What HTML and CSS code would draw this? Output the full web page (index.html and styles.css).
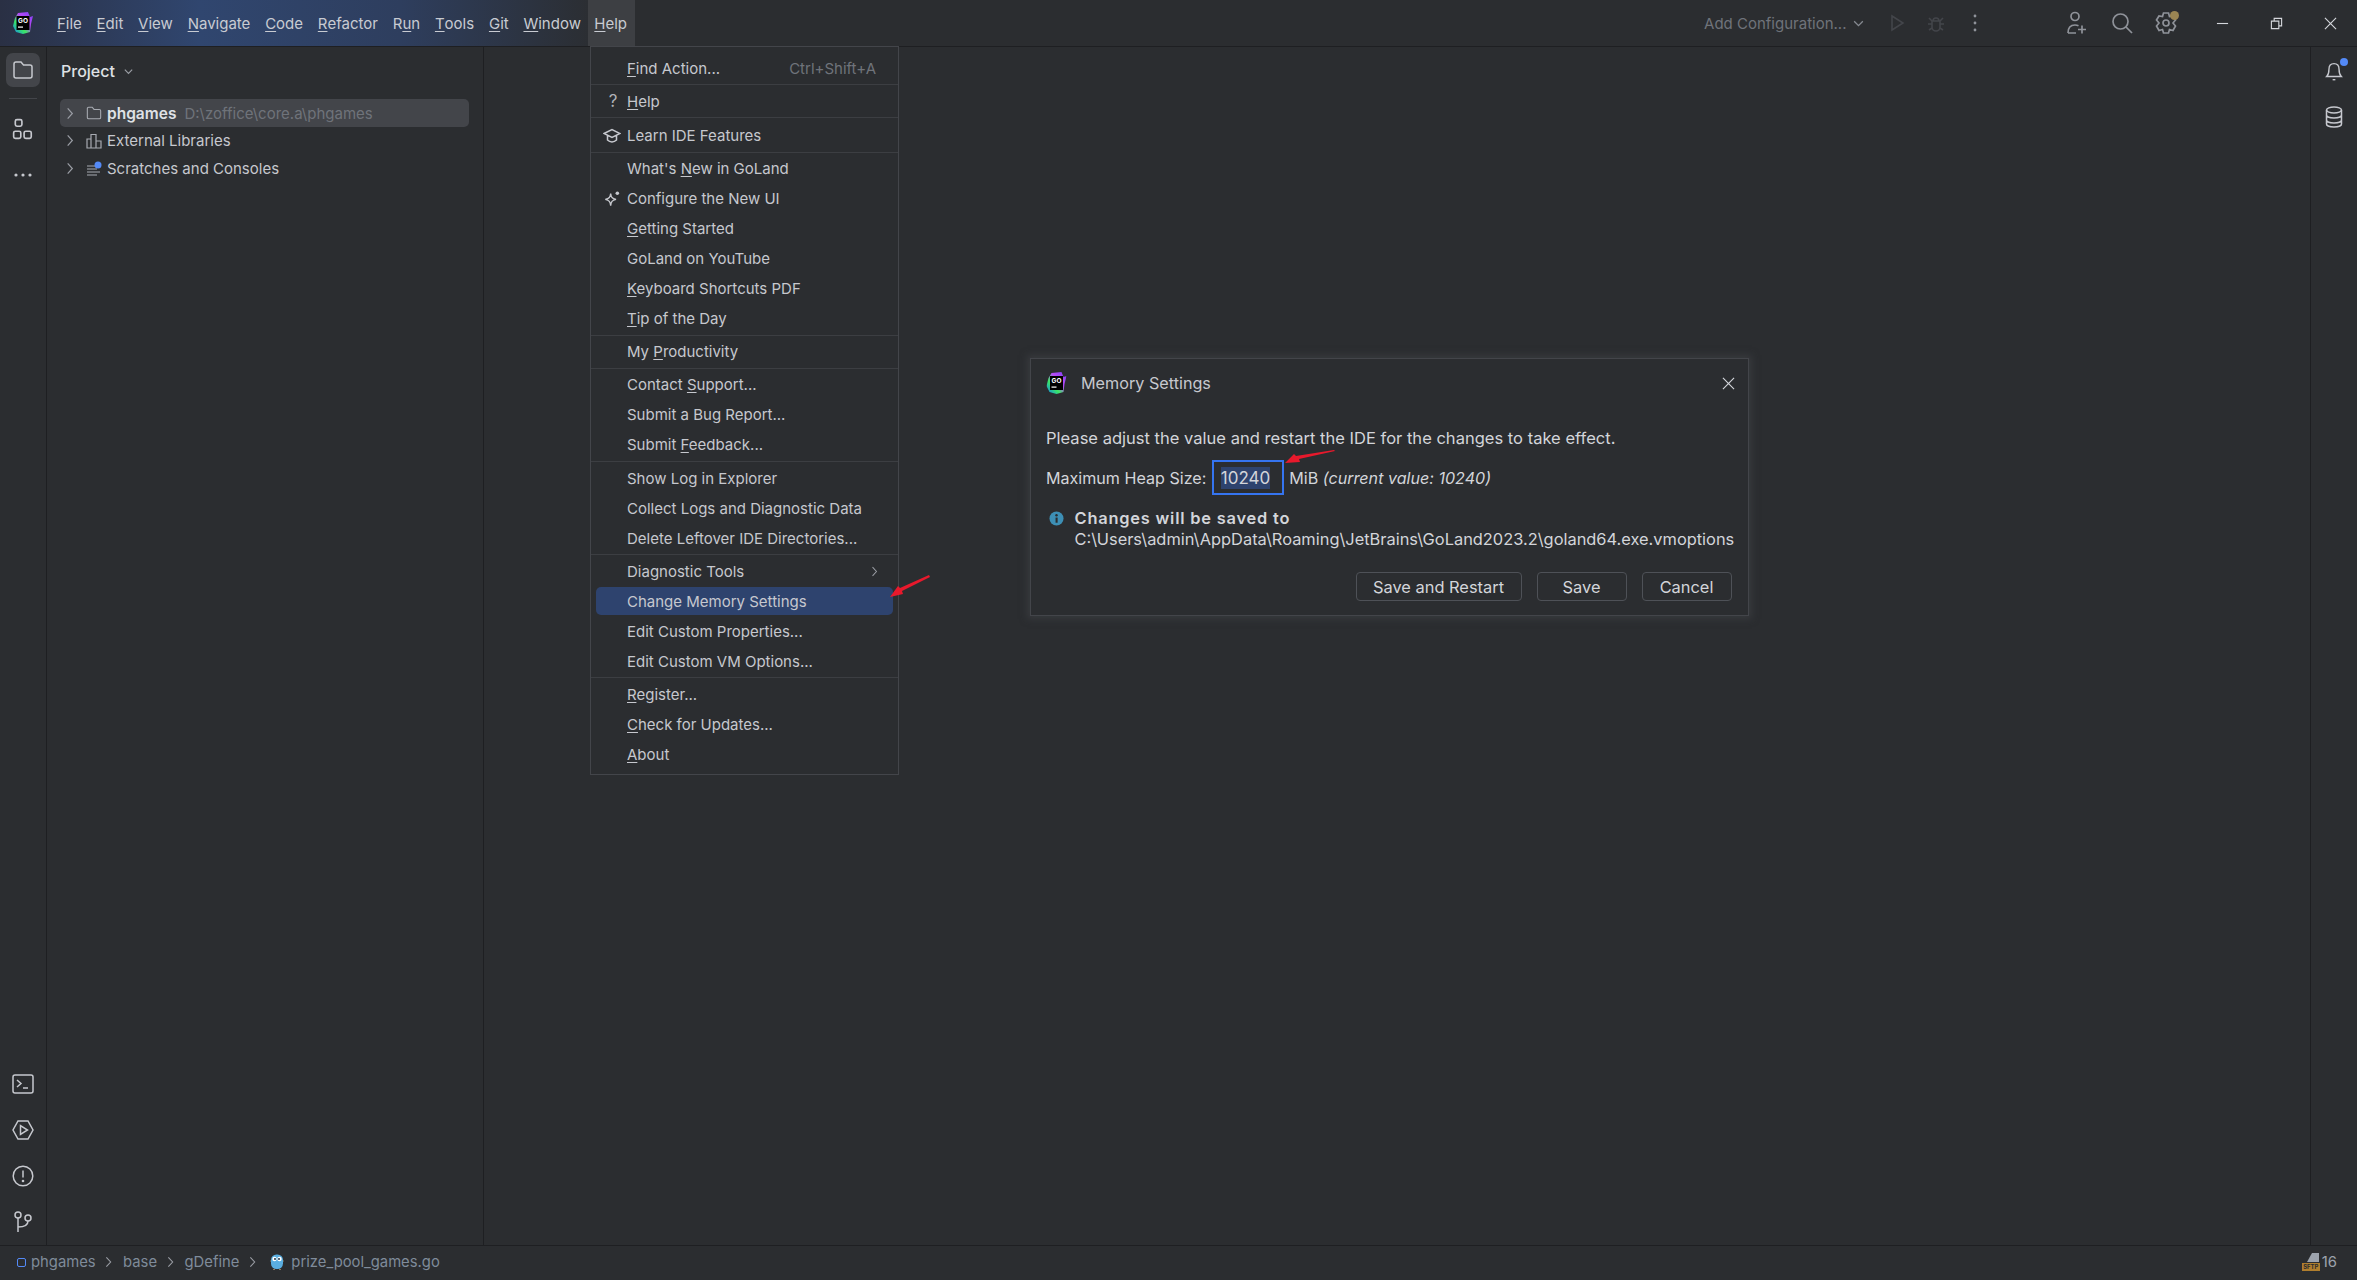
FILE: index.html
```html
<!DOCTYPE html>
<html lang="en">
<head>
<meta charset="utf-8">
<title>GoLand</title>
<link rel="stylesheet" href="styles.css">
</head>
<body>
<svg class="defs" width="0" height="0" aria-hidden="true">
  <defs>
    <linearGradient id="goGrad" x1="0" y1="1" x2="1" y2="0">
      <stop offset="0" stop-color="#0d7bf7"/>
      <stop offset=".35" stop-color="#3bea62"/>
      <stop offset=".6" stop-color="#b74af7"/>
      <stop offset="1" stop-color="#7b3ff2"/>
    </linearGradient>
    <symbol id="goLogo" viewBox="0 0 20 22">
      <path d="M5 1 15 0l2 5 3-1-2 8-1 8-7 2-7-2-3-6 2-8z" fill="url(#goGrad)"/>
      <rect x="3.5" y="4" width="13" height="14" fill="#000"/>
      <text x="10" y="11" class="logo-text">GO</text>
      <rect x="5" y="14.5" width="5" height="1.2" fill="#fff"/>
    </symbol>
  </defs>
</svg>
<div class="app">
  <header class="titlebar">
    <svg class="logo" viewBox="0 0 20 22"><use href="#goLogo"/></svg>
    <nav class="menubar">
      <span class="mb-item"><u>F</u>ile</span>
      <span class="mb-item"><u>E</u>dit</span>
      <span class="mb-item"><u>V</u>iew</span>
      <span class="mb-item"><u>N</u>avigate</span>
      <span class="mb-item"><u>C</u>ode</span>
      <span class="mb-item"><u>R</u>efactor</span>
      <span class="mb-item">R<u>u</u>n</span>
      <span class="mb-item"><u>T</u>ools</span>
      <span class="mb-item"><u>G</u>it</span>
      <span class="mb-item"><u>W</u>indow</span>
      <span class="mb-item mb-open"><u>H</u>elp</span>
    </nav>
    <div class="toolbar">
      <span class="config">Add Configuration...</span>
      <svg class="ic config-chev" viewBox="0 0 12 12"><path d="M2 4l4 4 4-4" class="st-dim"/></svg>
      <svg class="ic tb-run" viewBox="0 0 20 20"><path d="M5 3l11 7-11 7z" class="st-off"/></svg>
      <svg class="ic tb-bug" viewBox="0 0 20 20"><path d="M6 8h8v6a4 4 0 0 1-8 0zM7 8a3 3 0 0 1 6 0M6 11H2M18 11h-4M3 5l3 3M17 5l-3 3M3 17l3-2M17 17l-3-2" class="st-off"/></svg>
      <svg class="ic tb-more" viewBox="0 0 6 20"><circle cx="3" cy="3" r="1.4"/><circle cx="3" cy="10" r="1.4"/><circle cx="3" cy="17" r="1.4"/></svg>
      <svg class="ic tb-user" viewBox="0 0 22 24"><circle cx="9" cy="5.500" r="4" class="st-tb"/><path d="M2 22c0-5 2.500-8 7-8 1.500 0 2.500.3 3.500.8M2 22h8M16 14.500v8M12 18.500h8" class="st-tb"/></svg>
      <svg class="ic tb-search" viewBox="0 0 22 22"><circle cx="9.500" cy="9.500" r="7.500" class="st-tb"/><path d="M15 15l6 6" class="st-tb"/></svg>
      <span class="tb-gear">
        <svg class="ic gear" viewBox="0 0 22 24"><path d="M8.500 2h5l1 3.500 3.500-.5 2.500 4-2.500 3 2.500 3-2.500 4.500-3.500-1-1 3.500h-5l-1-3.500-3.500 1L1.500 15 4 12 1.500 9 4 5l3.500.5z" class="st-tb"/><circle cx="11" cy="12" r="3" class="st-tb"/></svg>
        <span class="gear-dot"></span>
      </span>
      <span class="win win-min"><svg class="ic" viewBox="0 0 14 14"><path d="M1 7h12" class="st-win"/></svg></span>
      <span class="win"><svg class="ic" viewBox="0 0 14 14"><path d="M1.500 4.500h8v8h-8zM4.500 4.500v-3h8v8h-3" class="st-win"/></svg></span>
      <span class="win"><svg class="ic" viewBox="0 0 14 14"><path d="M1 1l12 12M13 1 1 13" class="st-win"/></svg></span>
    </div>
  </header>

  <main class="workspace">
    <aside class="strip">
      <div class="strip-top">
        <span class="strip-btn strip-active"><svg class="ic" viewBox="0 0 22 20"><path d="M2 4a2 2 0 0 1 2-2h5l2.500 3H18a2 2 0 0 1 2 2v9a2 2 0 0 1-2 2H4a2 2 0 0 1-2-2z" class="st-strip"/></svg></span>
        <span class="strip-sep"></span>
        <span class="strip-btn"><svg class="ic" viewBox="0 0 20 20"><rect x="3" y="1.500" width="6" height="6" rx="1.500" class="st-strip"/><rect x="1.500" y="12" width="6.500" height="6.500" rx="1.500" class="st-strip"/><rect x="11" y="12" width="6.500" height="6.500" rx="1.500" class="st-strip"/></svg></span>
        <span class="strip-btn strip-dots"><svg class="ic" viewBox="0 0 20 6"><circle cx="3" cy="3" r="1.600"/><circle cx="10" cy="3" r="1.600"/><circle cx="17" cy="3" r="1.600"/></svg></span>
      </div>
      <div class="strip-bottom">
        <span class="strip-btn"><svg class="ic" viewBox="0 0 22 20"><rect x="1" y="1" width="20" height="18" rx="2" class="st-strip"/><path d="M5 6l4 3.500L5 13M11 14h5" class="st-strip"/></svg></span>
        <span class="strip-btn"><svg class="ic" viewBox="0 0 22 20"><path d="M6 1h10l5 9-5 9H6l-5-9z" class="st-strip"/><path d="M8.500 5.500v9l7-4.500z" class="st-strip"/></svg></span>
        <span class="strip-btn"><svg class="ic" viewBox="0 0 22 22"><circle cx="11" cy="11" r="9.800" class="st-strip"/><path d="M11 5.500v7" class="st-strip"/><circle cx="11" cy="16" r="1.300" fill="#c6c8ce"/></svg></span>
        <span class="strip-btn"><svg class="ic" viewBox="0 0 20 22"><circle cx="5" cy="4" r="3" class="st-strip"/><circle cx="15" cy="7" r="3" class="st-strip"/><path d="M5 7v14M5 16c6 0 10-2 10-6" class="st-strip"/></svg></span>
      </div>
    </aside>

    <section class="project">
      <div class="project-head">Project
        <svg class="ic head-chev" viewBox="0 0 12 12"><path d="M2 4l4 4 4-4" class="st-chev"/></svg>
      </div>
      <ul class="tree">
        <li class="tree-row tree-selected">
          <svg class="ic chev" viewBox="0 0 8 14"><path d="M1.500 1.500 6.500 7l-5 5.500" class="st-chev"/></svg>
          <svg class="ic tree-ic" viewBox="0 0 18 16"><path d="M1.500 3a1.500 1.500 0 0 1 1.500-1.500h4l2 2.500h6a1.500 1.500 0 0 1 1.500 1.500V13a1.500 1.500 0 0 1-1.500 1.500H3A1.500 1.500 0 0 1 1.500 13z" class="st-tree"/></svg>
          <span class="tree-name">phgames</span>
          <span class="tree-path">D:\zoffice\core.a\phgames</span>
        </li>
        <li class="tree-row">
          <svg class="ic chev" viewBox="0 0 8 14"><path d="M1.500 1.500 6.500 7l-5 5.500" class="st-chev"/></svg>
          <svg class="ic tree-ic" viewBox="0 0 16 16"><path d="M1 6h4v9H1zM5 1.500h5V15H5zM10 8h5v7h-5z" class="st-tree"/></svg>
          <span>External Libraries</span>
        </li>
        <li class="tree-row">
          <svg class="ic chev" viewBox="0 0 8 14"><path d="M1.500 1.500 6.500 7l-5 5.500" class="st-chev"/></svg>
          <svg class="ic tree-ic" viewBox="0 0 16 16"><path d="M1 5h8M1 8h10M1 11h13M1 14h10" class="st-tree"/><circle cx="12" cy="4" r="3.500" fill="#548af7"/></svg>
          <span>Scratches and Consoles</span>
        </li>
      </ul>
    </section>

    <section class="editor"></section>

    <aside class="strip-right">
      <span class="strip-btn"><svg class="ic" viewBox="0 0 20 24"><path d="M2 18c2-2 2.500-4 2.500-8 0-3.500 2-6 5.500-6s5.500 2.500 5.500 6c0 4 .5 6 2.500 8z" class="st-strip"/><path d="M8.500 21.500h3" class="st-strip"/></svg><span class="bell-dot"></span></span>
      <span class="strip-btn"><svg class="ic" viewBox="0 0 18 22"><ellipse cx="9" cy="4" rx="7.500" ry="3" class="st-strip"/><path d="M1.500 4v14c0 1.700 3.400 3 7.500 3s7.500-1.300 7.500-3V4M1.500 9c0 1.700 3.400 3 7.500 3s7.500-1.300 7.500-3M1.500 14c0 1.700 3.400 3 7.500 3s7.500-1.300 7.500-3" class="st-strip"/></svg></span>
    </aside>
  </main>

  <footer class="statusbar">
    <span class="crumb-square"></span>
    <span class="crumb">phgames</span>
    <svg class="ic crumb-chev" viewBox="0 0 8 14"><path d="M1.500 1.500 6.500 7l-5 5.500" class="st-chev"/></svg>
    <span class="crumb">base</span>
    <svg class="ic crumb-chev" viewBox="0 0 8 14"><path d="M1.500 1.500 6.500 7l-5 5.500" class="st-chev"/></svg>
    <span class="crumb">gDefine</span>
    <svg class="ic crumb-chev" viewBox="0 0 8 14"><path d="M1.500 1.500 6.500 7l-5 5.500" class="st-chev"/></svg>
    <svg class="ic gopher" viewBox="0 0 14 16"><rect x="1" y="0.500" width="12" height="14.500" rx="5.500" fill="#5aaee0"/><path d="M0 7h1M13 7h1M3 15.500h2M9 15.500h2" stroke="#8a7a60"/><circle cx="4.500" cy="5" r="2.200" fill="#fff"/><circle cx="9.500" cy="5" r="2.200" fill="#fff"/><circle cx="5" cy="5" r=".9" fill="#123"/><circle cx="9" cy="5" r=".9" fill="#123"/></svg>
    <span class="crumb crumb-file">prize_pool_games.go</span>
    <span class="status-right">
      <span class="sftp">
        <svg class="ic sftp-page" viewBox="0 0 12 9"><path d="M5 0h7v9H0z" fill="#9da3ad"/></svg>
        <span class="sftp-tag">SFTP</span>
      </span>
      <span class="status-num">16</span>
    </span>
  </footer>
</div>

<div class="menu">
  <div class="menu-group menu-first">
    <div class="mi"><span><u>F</u>ind Action...</span><span class="shortcut">Ctrl+Shift+A</span></div>
  </div>
  <div class="menu-group">
    <div class="mi"><span class="mi-glyph">?</span><span><u>H</u>elp</span></div>
  </div>
  <div class="menu-group menu-learn">
    <div class="mi"><svg class="ic mi-ic" viewBox="0 0 18 16"><path d="M1 5.500 9 1.500l8 4-8 4zM4.500 7.500v4.500c2.500 2.500 6.500 2.500 9 0V7.500" class="st-strip"/></svg><span>Learn IDE Features</span></div>
  </div>
  <div class="menu-group">
    <div class="mi"><span>What's <u>N</u>ew in GoLand</span></div>
    <div class="mi"><svg class="ic mi-ic" viewBox="0 0 18 18"><path d="M7.500 3c.5 4 1.500 5.500 6 6.500-4.500 1-5.500 2.500-6 7-.5-4.500-1.500-6-6-7 4.500-1 5.500-2.500 6-6.500z" class="st-strip"/><circle cx="15" cy="2.500" r="2" fill="#c6c8ce"/></svg><span>Configure the New UI</span></div>
    <div class="mi"><span><u>G</u>etting Started</span></div>
    <div class="mi"><span>GoLand on YouTube</span></div>
    <div class="mi"><span><u>K</u>eyboard Shortcuts PDF</span></div>
    <div class="mi"><span><u>T</u>ip of the Day</span></div>
  </div>
  <div class="menu-group">
    <div class="mi"><span>My <u>P</u>roductivity</span></div>
  </div>
  <div class="menu-group">
    <div class="mi"><span>Contact <u>S</u>upport...</span></div>
    <div class="mi"><span>Submit a Bug Report...</span></div>
    <div class="mi"><span>Submit <u>F</u>eedback...</span></div>
  </div>
  <div class="menu-group">
    <div class="mi"><span>Show Log in Explorer</span></div>
    <div class="mi"><span>Collect Logs and Diagnostic Data</span></div>
    <div class="mi"><span>Delete Leftover IDE Directories...</span></div>
  </div>
  <div class="menu-group">
    <div class="mi"><span>Diagnostic Tools</span><svg class="ic mi-sub" viewBox="0 0 8 14"><path d="M1.500 1.500 6.500 7l-5 5.500" class="st-chev"/></svg></div>
    <div class="mi mi-active"><span>Change Memory Settings</span></div>
    <div class="mi"><span>Edit Custom Properties...</span></div>
    <div class="mi"><span>Edit Custom VM Options...</span></div>
  </div>
  <div class="menu-group menu-last">
    <div class="mi"><span><u>R</u>egister...</span></div>
    <div class="mi"><span><u>C</u>heck for Updates...</span></div>
    <div class="mi"><span><u>A</u>bout</span></div>
  </div>
</div>

<svg class="arrow arrow-menu" viewBox="0 0 40 22"><path d="M40 2 12 16l1 3-13 3 8-11 2 2L39 0z" fill="#e8192c"/></svg>

<div class="dialog">
  <div class="dlg-title">
    <svg class="dlg-logo" viewBox="0 0 20 22"><use href="#goLogo"/></svg>
    <span class="dlg-name">Memory Settings</span>
    <svg class="ic dlg-close" viewBox="0 0 14 14"><path d="M1 1l12 12M13 1 1 13" class="st-win"/></svg>
  </div>
  <p class="dlg-text">Please adjust the value and restart the IDE for the changes to take effect.</p>
  <div class="dlg-row">
    <span>Maximum Heap Size:</span>
    <span class="dlg-input"><span class="dlg-sel">10240</span></span>
    <span>MiB <em>(current value: 10240)</em></span>
  </div>
  <div class="dlg-info">
    <svg class="ic info-ic" viewBox="0 0 16 16"><circle cx="8" cy="8" r="7.500" fill="#3d8fb5"/><rect x="7" y="7" width="2.200" height="5.500" fill="#2b2d30"/><circle cx="8" cy="4.500" r="1.300" fill="#2b2d30"/></svg>
    <div>
      <div class="info-head">Changes will be saved to</div>
      <div class="info-path">C:\Users\admin\AppData\Roaming\JetBrains\GoLand2023.2\goland64.exe.vmoptions</div>
    </div>
  </div>
  <div class="dlg-actions">
    <span class="btn btn-wide">Save and Restart</span>
    <span class="btn">Save</span>
    <span class="btn">Cancel</span>
  </div>
</div>

<svg class="arrow arrow-dlg" viewBox="0 0 50 13"><path d="M50 1 14 9l1 3-15 1 9-9 2 2 38-6z" fill="#e8192c"/></svg>
</body>
</html>
```

FILE: styles.css
```css
* { box-sizing: border-box; }
html, body { margin: 0; height: 100%; }
body {
  background: #2b2d30;
  color: #c6c8ce;
  font-family: "Inter", "Liberation Sans", sans-serif;
  font-size: 15px;
  overflow: hidden;
}
.defs { position: absolute; }
u { text-underline-offset: 2px; text-decoration-thickness: 1px; }
.ic { display: block; fill: none; flex: none; }
.logo-text { font: 700 6.5px "Inter", sans-serif; fill: #fff; text-anchor: middle; }

.st-dim { stroke: #868a91; stroke-width: 1.2; fill: none; }
.st-off { stroke: #43454a; stroke-width: 1.6; fill: none; }
.st-tb { stroke: #8f9299; stroke-width: 1.7; fill: none; }
.st-win { stroke: #d5d7dc; stroke-width: 1.2; fill: none; }
.st-strip { stroke: #c6c8ce; stroke-width: 1.5; fill: none; }
.st-chev { stroke: #9a9da4; stroke-width: 1.3; fill: none; }
.st-tree { stroke: #a8abb2; stroke-width: 1.2; fill: none; }

.app { display: flex; flex-direction: column; height: 1280px; }

/* title bar */
.titlebar {
  height: 47px;
  flex: none;
  display: flex;
  align-items: center;
  border-bottom: 1px solid #1e1f22;
  background: linear-gradient(90deg, #2a3044 0, #30466f 200px, #2e3e5e 400px, #2b2d30 600px);
}
.logo { width: 20px; height: 22px; margin: 0 16.500px 0 13px; flex: none; }
.menubar { display: flex; height: 46px; align-items: stretch; }
.mb-item { padding: 0 7.400px; display: flex; align-items: center; color: #c8cbd2; white-space: pre; }
.mb-open { background: #3d3f43; padding: 0 8px 0 6px; }
.toolbar { margin-left: auto; display: flex; align-items: center; height: 46px; }
.config { color: #6f737a; }
.config-chev { width: 13px; height: 13px; margin-left: 5px; }
.tb-run { width: 20px; height: 20px; margin-left: 22.500px; }
.tb-bug { width: 20px; height: 20px; margin-left: 19px; }
.tb-more { width: 6px; height: 20px; margin-left: 26px; fill: #8f9299; }
.tb-user { width: 22px; height: 24px; margin-left: 88px; }
.tb-search { width: 22px; height: 22px; margin-left: 22.500px; }
.tb-gear { position: relative; margin-left: 22.500px; display: block; }
.gear { width: 22px; height: 24px; }
.gear-dot { position: absolute; top: 0; right: -2px; width: 9px; height: 9px; border-radius: 50%; background: #9a8553; }
.win { width: 54px; display: flex; justify-content: center; }
.win .ic { width: 13px; height: 13px; }
.win-min { margin-left: 18px; }

/* body */
.workspace { flex: 1; display: flex; min-height: 0; }
.strip {
  width: 47px; flex: none;
  border-right: 1px solid #1e1f22;
  display: flex; flex-direction: column; justify-content: space-between;
}
.strip-top { padding-top: 6px; display: flex; flex-direction: column; align-items: center; }
.strip-bottom { padding-bottom: 6px; display: flex; flex-direction: column; align-items: center; gap: 12px; }
.strip-btn { width: 34px; height: 34px; display: flex; align-items: center; justify-content: center; border-radius: 7px; position: relative; }
.strip-btn .ic { width: 22px; height: 22px; }
.strip-active { background: #43454a; }
.strip-sep { width: 28px; height: 1px; background: #43454a; margin: 11px 0 13px; }
.strip-dots { margin-top: 12px; }
.strip-dots .ic { fill: #c6c8ce; height: 6px; }

.project { width: 437px; flex: none; border-right: 1px solid #1e1f22; }
.project-head { height: 48px; padding-left: 14px; display: flex; align-items: center; color: #dfe1e5; font-weight: 500; font-size: 16px; }
.head-chev { width: 11px; height: 11px; margin-left: 8px; }
.tree { list-style: none; margin: 4px 14px 0 13px; padding: 0; }
.tree-row { height: 27.800px; display: flex; align-items: center; white-space: nowrap; color: #c6c8ce; border-radius: 5px; padding-left: 6px; }
.tree-selected { background: #43454a; height: 28px; }
.chev { width: 8px; height: 13px; margin-right: 12px; }
.tree-ic { width: 16px; height: 16px; margin-right: 5px; }
.tree-name { font-weight: 600; color: #dfe1e5; font-size: 15.500px; }
.tree-path { color: #6f737a; margin-left: 8px; }
.editor { flex: 1; }
.strip-right { width: 47px; flex: none; border-left: 1px solid #1e1f22; display: flex; flex-direction: column; align-items: center; padding-top: 7px; gap: 12px; }
.bell-dot { position: absolute; top: 4px; right: 3px; width: 8px; height: 8px; border-radius: 50%; background: #548af7; }

/* status */
.statusbar {
  height: 35px; flex: none;
  border-top: 1px solid #1e1f22;
  display: flex; align-items: center;
  padding: 0 0 2px 17px;
  color: #7f8b9a;
  font-size: 14.800px;
}
.crumb-square { width: 9px; height: 9px; border: 1.500px solid #548af7; border-radius: 2px; margin-right: 5px; }
.crumb-chev { width: 7px; height: 12px; margin: 0 11px 0 9.500px; }
.gopher { width: 14px; height: 16px; margin: 0 7px 0 3.500px; }
.status-right { margin-left: auto; margin-right: 20px; display: flex; align-items: center; gap: 2px; }
.status-num { color: #9da3ad; }
.sftp { position: relative; width: 18px; height: 18px; display: block; }
.sftp-page { position: absolute; right: 1px; top: 0; width: 12px; height: 9px; }
.sftp-tag { position: absolute; left: 0; bottom: 0; width: 18px; height: 8px; background: #b07e2e; color: #2b2d30; font-size: 6px; line-height: 8px; text-align: center; font-weight: 700; }

/* menu */
.menu {
  position: absolute; left: 590px; top: 46px; width: 309px;
  background: #2b2d30; border: 1px solid #43454a;
  color: #c6c8ce;
}
.menu-group { padding: 1.050px 0; border-bottom: 1px solid #3c3e42; }
.menu-first { padding-top: 6px; }
.menu-learn { padding-top: 2.500px; }
.menu-last { border-bottom: none; padding-bottom: 4.500px; }
.mi { height: 30px; display: flex; align-items: center; padding: 0 17px 0 31px; position: relative; white-space: pre; border-radius: 5px; margin: 0 5px; }
.mi-active { background: #2e436e; height: 28px; margin: 1px 5px; }
.shortcut { margin-left: auto; color: #6f737a; }
.mi-glyph { position: absolute; left: 11px; width: 12px; text-align: center; font-size: 17px; color: #b0b3b9; }
.mi-ic { position: absolute; left: 7px; width: 18px; height: 16px; }
.mi-sub { margin-left: auto; width: 7px; height: 11px; margin-right: -2px; }

/* dialog */
.dialog {
  position: absolute; left: 1030px; top: 358px; width: 719px; height: 258px;
  background: #2b2d30;
  border: 1px solid #43454a;
  box-shadow: 0 0 7px 3px #43454a80;
  padding: 0 15px;
  display: flex; flex-direction: column;
  color: #d3d5da;
  font-size: 16.400px;
}
.dlg-title { height: 48px; display: flex; align-items: center; }
.dlg-logo { width: 21px; height: 22px; margin-right: 14px; }
.dlg-name { flex: 1; color: #c6c8ce; font-size: 16.200px; }
.dlg-close { width: 13px; height: 13px; margin-right: -2px; }
.dlg-text { margin: 19.500px 0 0; line-height: 22px; white-space: nowrap; font-size: 16.550px; }
.dlg-row { display: flex; align-items: center; gap: 5.500px; margin-top: 11.500px; height: 35px; font-size: 16.100px; }
.dlg-input { width: 72px; height: 35px; border: 2px solid #3574f0; display: flex; align-items: center; padding-left: 7px; }
.dlg-sel { background: #2e436e; height: 22px; line-height: 22px; font-size: 17px; }
.dlg-info { display: flex; margin-top: 13px; }
.info-ic { width: 15px; height: 15px; margin: 3px 10.500px 0 3px; }
.info-head { font-weight: 600; line-height: 21px; letter-spacing: .8px; }
.info-path { line-height: 21px; white-space: nowrap; }
.dlg-actions { display: flex; justify-content: flex-end; gap: 15px; margin-top: auto; margin-bottom: 14px; margin-right: 1.500px; }
.btn { height: 29px; width: 90px; border: 1px solid #4e5157; border-radius: 4px; display: flex; align-items: center; justify-content: center; color: #d3d5da; }
.btn-wide { width: 166px; }

.arrow { position: absolute; display: block; }
.arrow-menu { left: 890px; top: 575px; width: 40px; height: 22px; }
.arrow-dlg { left: 1285px; top: 450px; width: 50px; height: 13px; }
```
